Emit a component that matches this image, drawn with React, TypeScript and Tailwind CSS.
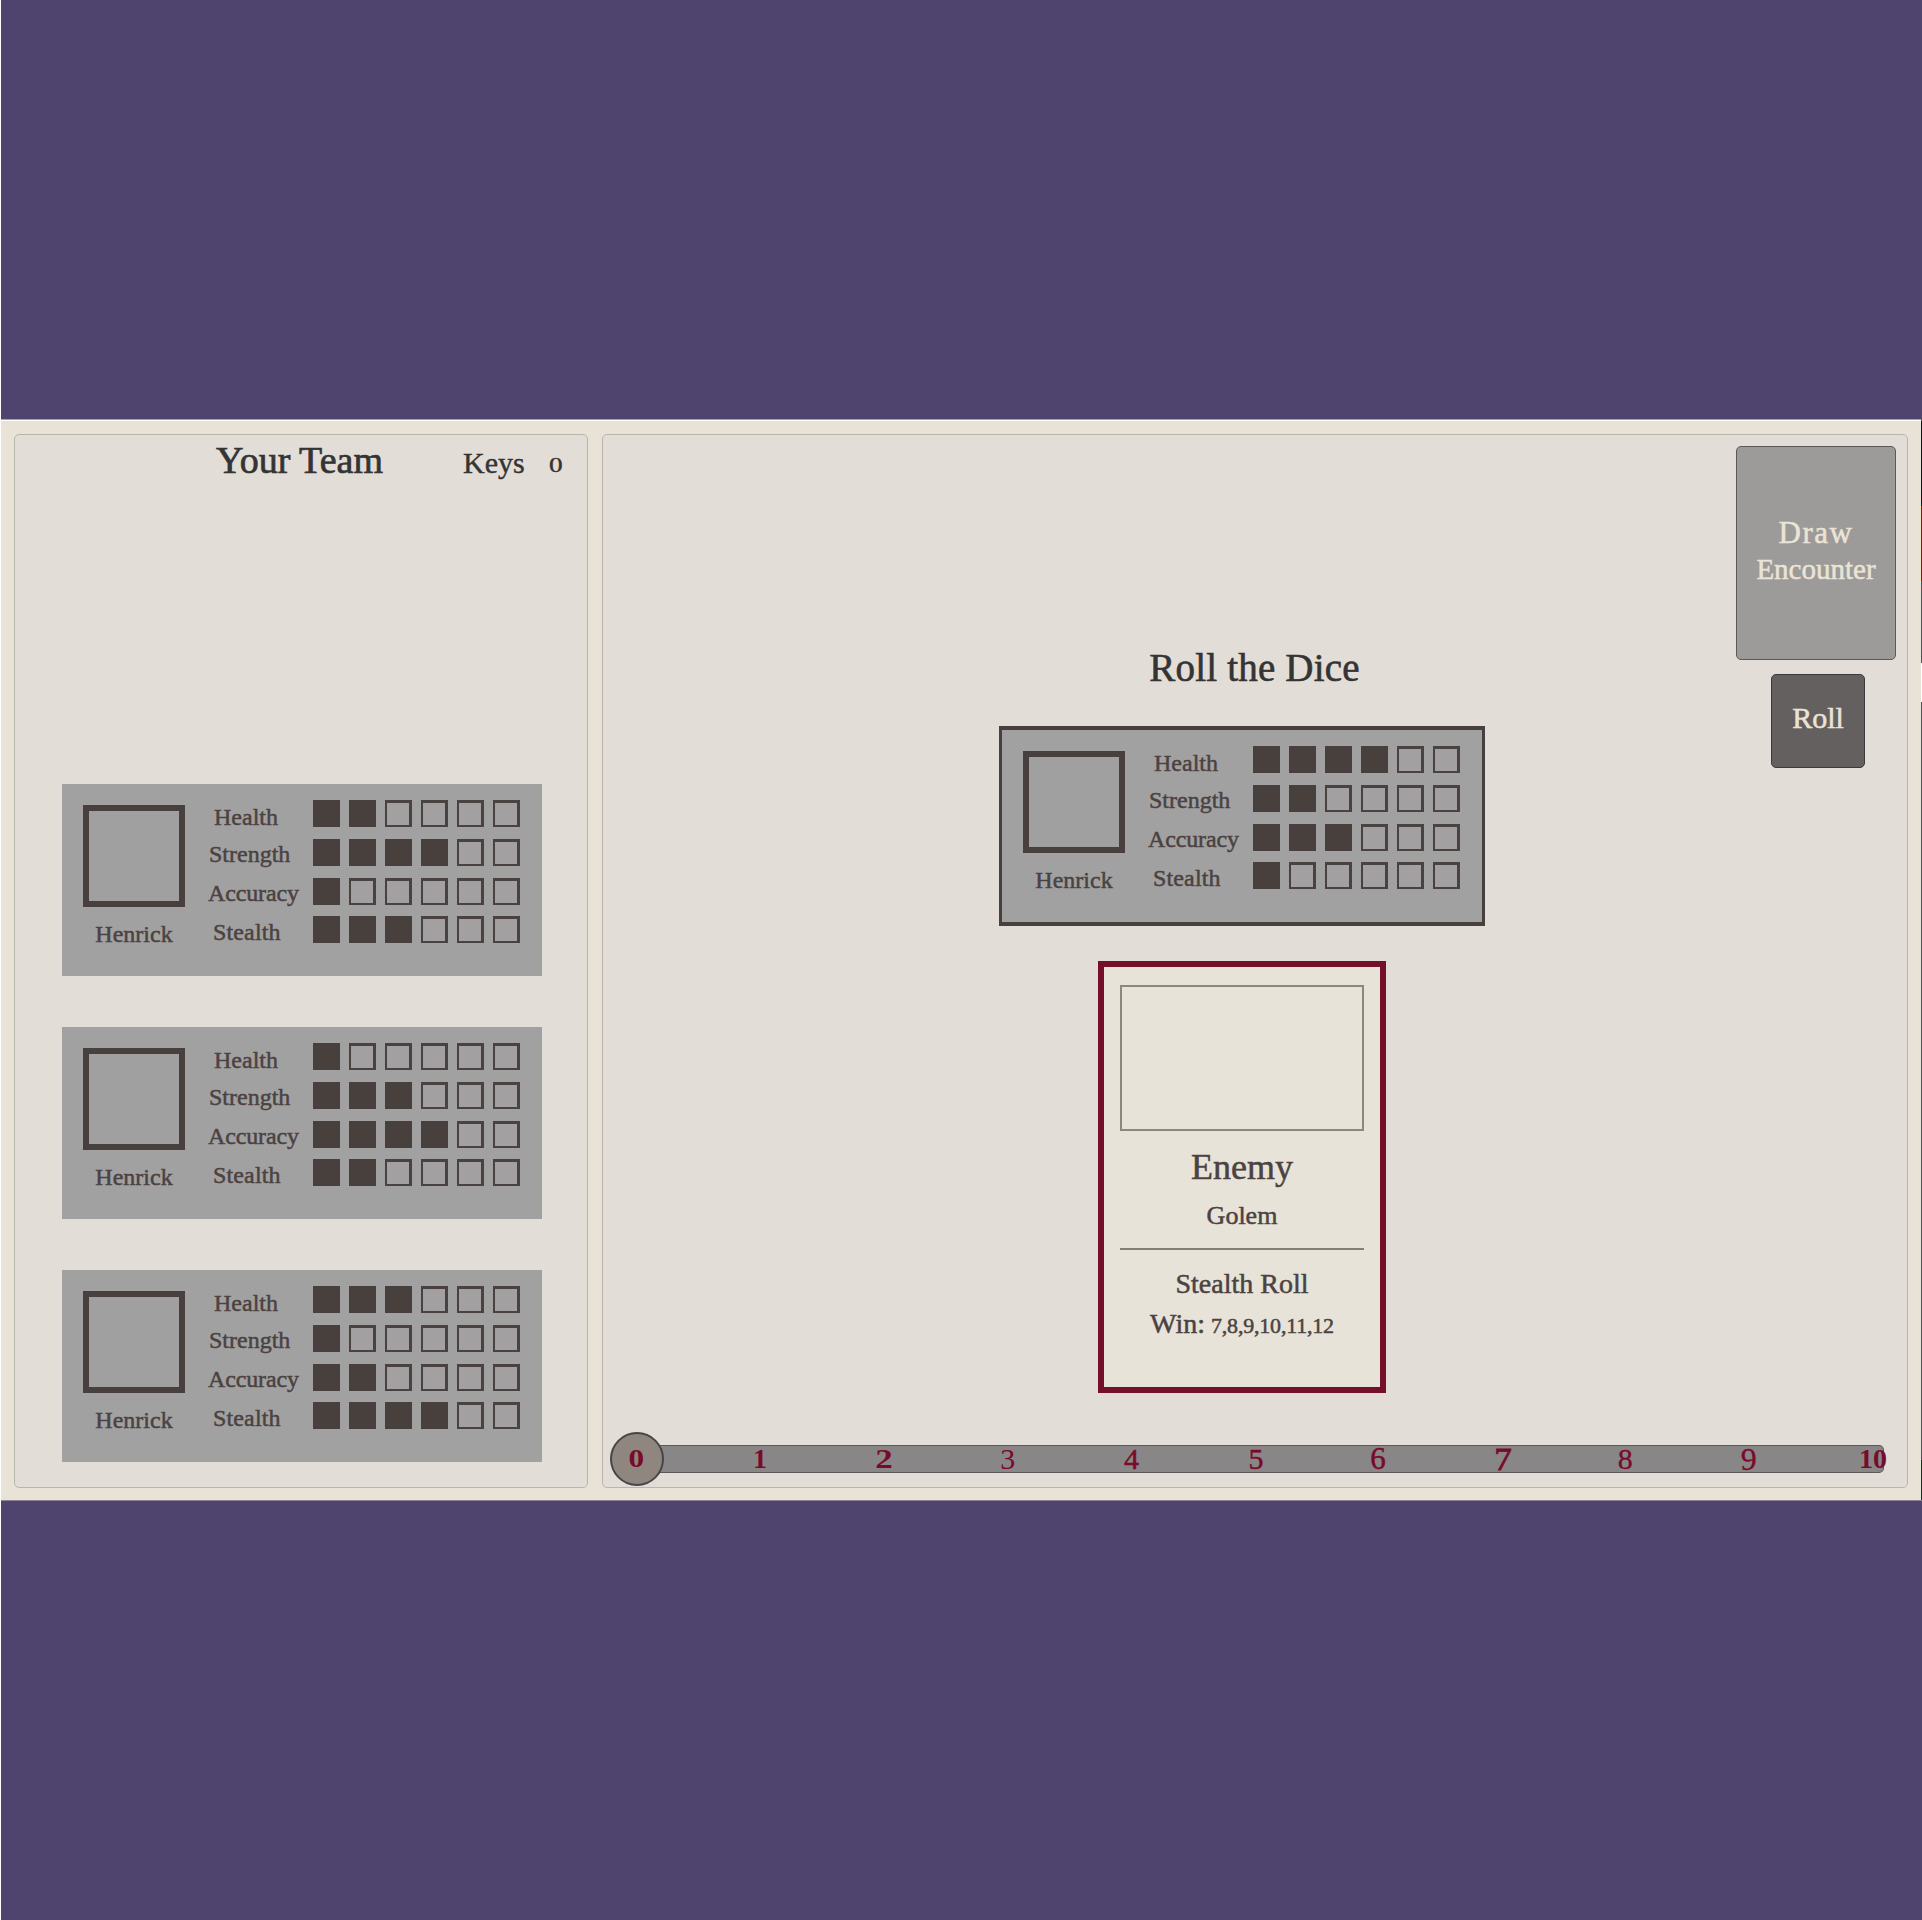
import React from "react";

type Stats = { Health: number; Strength: number; Accuracy: number; Stealth: number };

const team: Stats[] = [
  { Health: 2, Strength: 4, Accuracy: 1, Stealth: 3 },
  { Health: 1, Strength: 3, Accuracy: 4, Stealth: 2 },
  { Health: 3, Strength: 1, Accuracy: 2, Stealth: 4 },
];

const active: Stats = { Health: 4, Strength: 2, Accuracy: 3, Stealth: 1 };

const labels: { key: keyof Stats; cls: string }[] = [
  { key: "Health", cls: "h-9 ml-[7px] leading-[35px]" },
  { key: "Strength", cls: "h-[39px] ml-0.5 leading-[37px]" },
  { key: "Accuracy", cls: "h-[39px] ml-px leading-[37px] tracking-[-0.15px]" },
  { key: "Stealth", cls: "h-9 ml-1.5 leading-[36px] tracking-[0.15px]" },
];

const rowGaps = ["mb-3", "mb-3", "mb-[11px]", ""];

function CharacterCard({ stats }: { stats: Stats }) {
  return (
    <div className="flex h-[192px] w-[480px] bg-[#a1a1a1] text-[24px] text-[#4b4242] [-webkit-text-stroke:0.5px_#4b4242]">
      <div className="ml-[21px] flex w-[102px] flex-col items-center pt-[21px]">
        <div className="size-[102px] shrink-0 border-6 border-[#483f3f] bg-[#a1a0a1]" />
        <div className="mt-[7px] h-[35px] leading-[40px]">Henrick</div>
      </div>
      <div className="ml-[22px] w-[106px] pt-4">
        {labels.map(({ key, cls }) => (
          <div key={key} className={cls}>
            {key}
          </div>
        ))}
      </div>
      <div className="pt-4">
        {labels.map(({ key }, row) => (
          <div key={key} className={`flex gap-[9px] ${rowGaps[row]}`}>
            {[0, 1, 2, 3, 4, 5].map((i) => (
              <div
                key={i}
                className={
                  i < stats[key]
                    ? "size-[27px] border-2 border-[#483f3f] bg-[#47403d]"
                    : "size-[27px] border-2 border-t-3 border-r-3 border-[#4a4141] bg-[#a3a0a2]"
                }
              />
            ))}
          </div>
        ))}
      </div>
    </div>
  );
}

const ticks: { n: number; cls: string }[] = [
  { n: 0, cls: "text-[25px] font-bold scale-x-[1.25] -ml-px" },
  { n: 1, cls: "text-[28px] font-bold -ml-px" },
  { n: 2, cls: "text-[28px] font-bold scale-x-[1.25]" },
  { n: 3, cls: "text-[30px]" },
  { n: 4, cls: "text-[30px] [-webkit-text-stroke:0.5px]" },
  { n: 5, cls: "text-[30px] ml-0.5 [-webkit-text-stroke:0.5px]" },
  { n: 6, cls: "text-[31px] -ml-px [-webkit-text-stroke:0.5px]" },
  { n: 7, cls: "text-[32px] ml-0.5 scale-x-[1.1] [-webkit-text-stroke:0.8px]" },
  { n: 8, cls: "text-[30px] -ml-px [-webkit-text-stroke:0.3px]" },
  { n: 9, cls: "text-[32px] -ml-px [-webkit-text-stroke:0.3px]" },
  { n: 10, cls: "text-[28px] font-bold" },
];

export default function App() {
  return (
    <div className="flex h-[1920px] w-[1922px] flex-col overflow-hidden border-l border-white bg-[#4f446d] font-['Liberation_Serif',serif] text-[#333433]">
      <div className="h-[419px] shrink-0" />
      <div className="flex h-[1082px] shrink-0 border-b border-[#8c8398] bg-[#e9e3d7]">
        <div className="flex w-[1920px] shrink-0 flex-col">
          <div className="h-px bg-[#a59fb8]" />
          <div className="h-px bg-white" />
          <div className="flex gap-3.5 pt-[13px] pl-[13px]">
            <section className="h-[1054px] w-[574px] rounded-[5px] border border-[#b8b5aa] bg-[#e2ddd7]">
              <div className="flex h-[50px]">
                <h1 className="ml-[201px] w-[247px] text-[38px] leading-[50px] [-webkit-text-stroke:0.7px]">Your Team</h1>
                <div className="w-[86px] text-[30px] leading-[55px] [-webkit-text-stroke:0.4px]">Keys</div>
                <div className="origin-left scale-x-[1.3] text-[21px] leading-[61px] [-webkit-text-stroke:0.4px]">0</div>
              </div>
              <div className="mt-[299px] ml-[47px] flex flex-col gap-[51px]">
                {team.map((s, i) => (
                  <CharacterCard key={i} stats={s} />
                ))}
              </div>
            </section>

            <section className="h-[1054px] w-[1306px] rounded-[5px] border border-[#b8b5aa] bg-[#e2ddd7]">
              <div className="flex h-[997px]">
                <div className="ml-[396px] flex w-[486px] flex-col items-center">
                  <h2 className="mt-[206px] ml-[25px] h-[50px] text-[39px] leading-[53px] tracking-[0.2px] [-webkit-text-stroke:0.6px]">
                    Roll the Dice
                  </h2>
                  <div className="mt-[35px] border-x-3 border-y-4 border-[#483f3f]">
                    <CharacterCard stats={active} />
                  </div>
                  <div className="mt-[35px] flex h-[432px] w-[288px] flex-col items-center border-6 border-[#75102a] bg-[#e7e3d8] px-4 pt-[18px] text-[#4b4242] [-webkit-text-stroke:0.5px_#4b4242]">
                    <div className="h-[146px] w-[244px] shrink-0 border-2 border-[#8f877f]" />
                    <div className="mt-[15px] h-10 text-[36px] leading-[42px]">Enemy</div>
                    <div className="mt-[9px] h-10 text-[26px] leading-[42px]">Golem</div>
                    <div className="mt-[13px] h-0.5 w-[244px] bg-[#827f7a]" />
                    <div className="mt-[13px] h-10 text-[28px] leading-[42px]">Stealth Roll</div>
                    <div className="h-10 whitespace-nowrap text-[28px] leading-[42px]">
                      Win: <span className="-ml-px text-[22px] tracking-[-0.2px]">7,8,9,10,11,12</span>
                    </div>
                  </div>
                </div>
                <div className="ml-[251px] flex w-[160px] flex-col items-center pt-[11px] text-[#ebe4d6]">
                  <button className="h-[214px] w-[160px] rounded-[5px] border border-[#5a5858] bg-[#9d9a9a] pb-[5px] text-[29px] leading-9 [-webkit-text-stroke:0.5px]">
                    <span className="block text-[31px] tracking-[1.5px]">Draw</span>
                    Encounter
                  </button>
                  <button className="mt-3.5 ml-1 size-[94px] rounded-[5px] border border-[#3c3a3c] bg-[#656060] pb-[7px] text-[30px] [-webkit-text-stroke:0.5px]">
                    Roll
                  </button>
                </div>
              </div>
              <div className="relative ml-[7px] flex h-[54px] items-center">
                <div className="z-10 size-[54px] shrink-0 rounded-full border-2 border-[#484545] bg-[#8f8680]" />
                <div className="-ml-5 h-7 w-[1240px] rounded-r-[5px] border-y border-r border-[#5a5858] bg-[#898687]" />
                <div className="absolute top-0 left-[27px] z-20 flex h-[54px] w-[1236px] items-center justify-between text-[#780b2a]">
                  {ticks.map(({ n, cls }) => (
                    <div key={n} className="flex w-0 justify-center">
                      <span className={`leading-[54px] ${cls}`}>{n}</span>
                    </div>
                  ))}
                </div>
              </div>
            </section>
          </div>
        </div>
        <div className="flex w-px flex-col bg-[#525052] pt-0.5">
          <div className="h-[85px] bg-[#151315]" />
          <div className="h-[75px] bg-[#a80808]" />
          <div className="h-[82px] bg-[#525052]" />
          <div className="h-[39px] bg-white" />
          <div className="h-[758px] bg-[#525052]" />
          <div className="h-[40px] bg-[#12301c]" />
        </div>
      </div>
    </div>
  );
}
